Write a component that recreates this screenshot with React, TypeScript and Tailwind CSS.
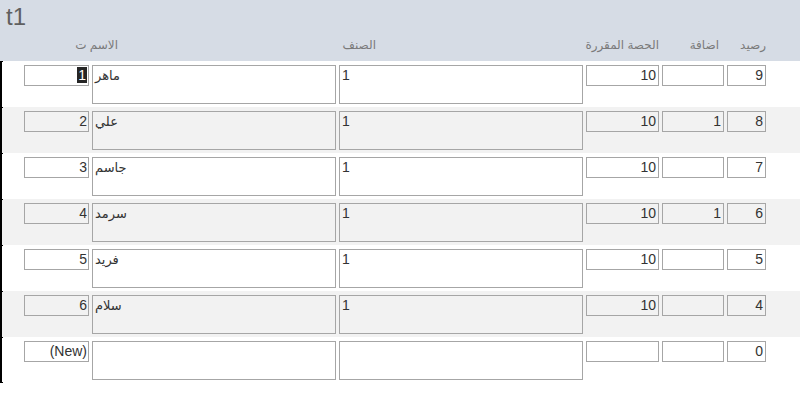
import React from 'react';

type Row = {
  id: string;
  name: string;
  cls: string;
  quota: string;
  add: string;
  balance: string;
  selected?: boolean;
};

const rows: Row[] = [
  { id: '1', name: 'ماهر', cls: '1', quota: '10', add: '', balance: '9', selected: true },
  { id: '2', name: 'علي', cls: '1', quota: '10', add: '1', balance: '8' },
  { id: '3', name: 'جاسم', cls: '1', quota: '10', add: '', balance: '7' },
  { id: '4', name: 'سرمد', cls: '1', quota: '10', add: '1', balance: '6' },
  { id: '5', name: 'فريد', cls: '1', quota: '10', add: '', balance: '5' },
  { id: '6', name: 'سلام', cls: '1', quota: '10', add: '', balance: '4' },
  { id: '(New)', name: '', cls: '', quota: '', add: '', balance: '0' },
];

const RecordRow: React.FC<{ row: Row; shaded: boolean; last: boolean }> = ({ row, shaded, last }) => {
  return (
    <div className={`flex h-[46px] ${shaded ? 'bg-[#f2f2f2]' : 'bg-white'}`}>
      {/* record selector edge */}
      <div className={`w-[3px] shrink-0 border-l-2 border-t border-black ${last ? 'border-b' : ''}`} />

      <div className="flex items-start gap-[3px] pt-[4px] pl-[21px]">
        <div className="w-[65px] h-[21px] border border-[#a6a6a6] text-right pr-[1px] leading-[19px]">
          {row.selected ? <span className="bg-[#262626] text-white px-[1px]">{row.id}</span> : row.id}
        </div>
        <div className="w-[244px] h-[39px] border border-[#a6a6a6] text-left pl-[2px] leading-[19px] text-[13px]">
          {row.name}
        </div>
        <div className="w-[244px] h-[39px] border border-[#a6a6a6] text-left pl-[2px] leading-[19px]">
          {row.cls}
        </div>
        <div className="w-[73px] h-[21px] border border-[#a6a6a6] text-right pr-[2px] leading-[19px]">
          {row.quota}
        </div>
        <div className="w-[62px] h-[21px] border border-[#a6a6a6] text-right pr-[2px] leading-[19px]">
          {row.add}
        </div>
        <div className="w-[39px] h-[21px] border border-[#a6a6a6] text-right pr-[2px] leading-[19px]">
          {row.balance}
        </div>
      </div>
    </div>
  );
};

export default function App() {
  return (
    <div className="w-[800px] h-[404px] bg-white overflow-hidden font-['Liberation_Sans','DejaVu_Sans',sans-serif] text-[14px] text-[#333333]">
      {/* Form header */}
      <div className="h-[61px] bg-[#d6dce5] flex flex-col">
        <div className="h-[34px] pl-[6px] pt-[2px] text-[24px] leading-[30px] text-[#5f5f5f]">t1</div>
        <div className="flex items-center h-[22px] text-[12px] text-[#7a7a7a]">
          <div className="w-[118px] text-right">الاسم ت</div>
          <div className="w-[258px] text-right">الصنف</div>
          <div className="w-[283px] text-right">الحصة المقررة</div>
          <div className="w-[60px] text-right">اضافة</div>
          <div className="w-[47px] text-right">رصيد</div>
        </div>
      </div>

      {/* Detail rows */}
      <div>
        {rows.map((r, i) => (
          <RecordRow key={i} row={r} shaded={i % 2 === 1} last={i === rows.length - 1} />
        ))}
      </div>
    </div>
  );
}
